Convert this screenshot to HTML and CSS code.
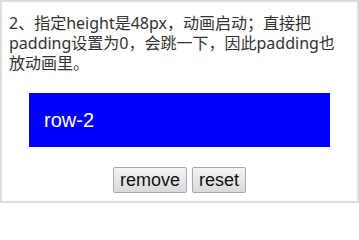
FILE: index.html
```html
<!DOCTYPE html>
<html lang="zh-CN">
<head>
<meta charset="utf-8">
<title>demo</title>
<link rel="stylesheet" href="styles.css">
</head>
<body>
<div class="panel">
  <p class="note">2、指定height是48px，动画启动；直接把padding设置为0，会跳一下，因此padding也放动画里。</p>
  <div class="row">row-2</div>
  <div class="actions"><button class="btn">remove</button> <button class="btn">reset</button></div>
</div>
</body>
</html>
```
FILE: styles.css
```css
html, body {
  margin: 0;
  padding: 0;
  background: #fff;
}
.panel {
  box-sizing: border-box;
  width: 359px;
  height: 203px;
  border: 2px solid #dddddd;
  padding: 11px 7px 0 7px;
  overflow: hidden;
}
.note {
  margin: 0 0 20px 0;
  font-family: "Noto Sans", "Noto Sans CJK SC", sans-serif;
  font-size: 16px;
  line-height: 20px;
  color: #333;
  text-spacing-trim: space-all;
}
.row {
  margin: 0 20px;
  height: 54px;
  box-sizing: border-box;
  padding-left: 15px;
  display: flex;
  align-items: center;
  background: #0000ff;
  color: #fff;
  font-family: "Liberation Sans", Arial, sans-serif;
  font-size: 20px;
}
.actions {
  margin-top: 20px;
  text-align: center;
  font-family: "Liberation Sans", Arial, sans-serif;
  font-size: 18px;
}
.btn {
  font-family: "Liberation Sans", Arial, sans-serif;
  font-size: 18px;
  height: 26px;
  padding: 0 6px;
  margin: 0;
  color: #111;
  border: 1px solid #a9a9a9;
  border-radius: 2px;
  background: linear-gradient(#f4f4f4, #dadada);
  vertical-align: top;
}
```
